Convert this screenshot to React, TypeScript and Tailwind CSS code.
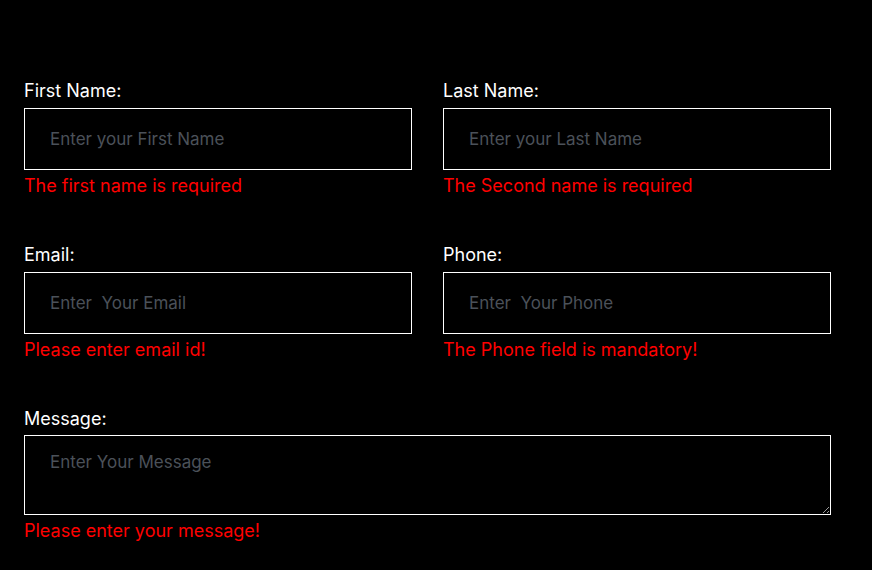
import React from "react";

interface FieldProps {
  label: string;
  placeholder: string;
  error: string;
}

const Field = (props: FieldProps) => {
  const { label, placeholder, error } = props;

  return (
    <div className="flex flex-col">
      <label className="text-[18px] leading-6 text-white mb-[5px]">{label}</label>
      <input
        type="text"
        placeholder={placeholder}
        className="h-[62px] w-full border border-white bg-black pl-[25px] text-[17px] text-white placeholder:text-[#4b5159] outline-none"
      />
      <p className="mt-[3px] text-[18px] leading-[26px] text-[#ff0000]">{error}</p>
    </div>
  );
};

const App = () => {
  return (
    <div
      className="min-h-[570px] w-full bg-black pl-6 pr-[41px] pt-[79px]"
      style={{ fontFamily: "Inter, 'Noto Sans', sans-serif" }}
    >
      <div className="grid grid-cols-2 gap-x-[31px] gap-y-[44px]">
        <Field label="First Name:" placeholder="Enter your First Name" error="The first name is required" />
        <Field label="Last Name:" placeholder="Enter your Last Name" error="The Second name is required" />
        <Field label="Email:" placeholder="Enter  Your Email" error="Please enter email id!" />
        <Field label="Phone:" placeholder="Enter  Your Phone" error="The Phone field is mandatory!" />
        <div className="col-span-2 flex flex-col">
          <label className="text-[18px] leading-6 text-white mb-[4px]">Message:</label>
          <textarea
            placeholder="Enter Your Message"
            className="h-[80px] w-full border border-white bg-black px-[25px] pt-[14px] text-[17px] text-white placeholder:text-[#4b5159] outline-none"
          />
          <p className="mt-[3px] text-[18px] leading-[26px] text-[#ff0000]">Please enter your message!</p>
        </div>
      </div>
    </div>
  );
};

export default App;
